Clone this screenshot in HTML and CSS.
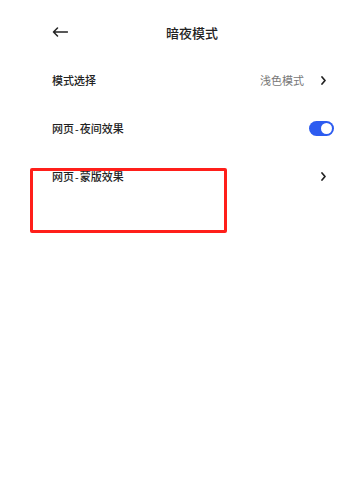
FILE: index.html
```html
<!DOCTYPE html>
<html lang="zh-CN">
  <head>
    <meta charset="UTF-8" />
    <meta name="viewport" content="width=device-width, initial-scale=1.0" />
    <title>暗夜模式</title>
    <link rel="stylesheet" href="styles.css">
  </head>
  <body>
    <div class="page">
      <!-- Header -->
      <div class="header">
        <svg class="back" width="16" height="10" viewBox="0 0 16 10">
          <path d="M15.5 5H1.5M5.5 1L1.5 5L5.5 9" fill="none" stroke="#222" stroke-width="1.5" stroke-linecap="round" stroke-linejoin="round" />
        </svg>
        <h1>暗夜模式</h1>
      </div>

      <!-- Settings list -->
      <div class="list">
        <div class="row">
          <span class="label">模式选择</span>
          <span class="value">浅色模式</span>
          <svg class="chevron" width="5" height="9" viewBox="0 0 5 9">
            <path d="M1 1L4 4.5L1 8" fill="none" stroke="#222" stroke-width="1.7" stroke-linecap="round" stroke-linejoin="round" />
          </svg>
        </div>
        <div class="row">
          <span class="label">网页<span class="dash">-</span>夜间效果</span>
          <div class="toggle on"><div class="knob"></div></div>
        </div>
        <div class="row">
          <span class="label">网页<span class="dash">-</span>蒙版效果</span>
          <svg class="chevron" width="5" height="9" viewBox="0 0 5 9">
            <path d="M1 1L4 4.5L1 8" fill="none" stroke="#222" stroke-width="1.7" stroke-linecap="round" stroke-linejoin="round" />
          </svg>
        </div>
      </div>

      <div class="highlight"></div>
    </div>
  </body>
</html>
```

FILE: styles.css
```css
body {
  font-family: "Noto Sans CJK SC", "Noto Sans", sans-serif;
  margin: 0;
  padding: 0;
  background: #fff;
  color: #222;
}
.page {
  position: relative;
  width: 356px;
  height: 493px;
}
.header {
  display: flex;
  align-items: center;
  height: 48px;
  margin-top: 8px;
  padding-left: 52px;
}
.back {
  display: block;
}
h1 {
  margin: 0 0 0 98px;
  font-size: 13px;
  font-weight: 500;
  color: #222;
}
.list {
  display: flex;
  flex-direction: column;
}
.row {
  display: flex;
  align-items: center;
  height: 48px;
  padding: 0 22px 0 52px;
}
.label {
  flex: 1;
  font-size: 11px;
  font-weight: 500;
}
.dash {
  font-family: "Liberation Sans", sans-serif;
  margin: 0 1px;
}
.value {
  font-size: 11px;
  color: #777;
  margin-right: 17px;
}
.chevron {
  display: block;
  margin-right: 8px;
}
.toggle {
  width: 25px;
  height: 15px;
  border-radius: 8px;
  background: #ccc;
  display: flex;
  align-items: center;
  padding: 0 2px;
  box-sizing: border-box;
}
.toggle.on {
  background: #2d5cf0;
  justify-content: flex-end;
}
.knob {
  width: 11px;
  height: 11px;
  border-radius: 50%;
  background: #fff;
}
.highlight {
  position: absolute;
  left: 30px;
  top: 160px;
  width: 191px;
  height: 59px;
  border: 3px solid #ff1f1a;
  border-radius: 2px;
}
```
